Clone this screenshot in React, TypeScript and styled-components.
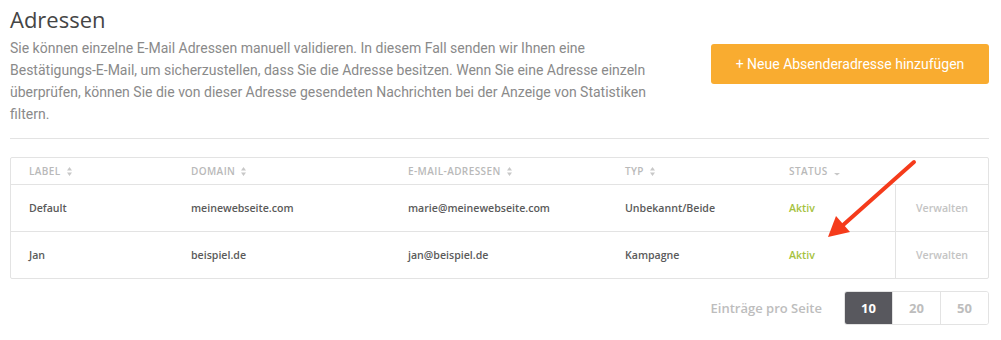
import React from 'react';
import styled, { createGlobalStyle } from 'styled-components';

const GlobalStyle = createGlobalStyle`
  html, body {
    margin: 0;
    padding: 0;
    background: #fff;
  }
  body {
    font-family: Roboto, "Liberation Sans", sans-serif;
  }
`;

const Page = styled.div`
  position: relative;
  width: 1001px;
  height: 340px;
  padding: 0 12px 0 10px;
  box-sizing: border-box;
  overflow: hidden;
`;

const Intro = styled.div`
  display: flex;
  justify-content: space-between;
  align-items: flex-start;
  padding-bottom: 13px;
  border-bottom: 1px solid #e3e3e3;
`;

const IntroText = styled.div`
  width: 660px;
`;

const Title = styled.h1`
  margin: 4px 0 0;
  font-family: "Open Sans", sans-serif;
  font-weight: 400;
  font-size: 22px;
  line-height: 30px;
  color: #454545;
`;

const Lead = styled.p`
  margin: 3px 0 0;
  font-size: 14px;
  line-height: 22px;
  color: #8a8a8a;
`;

const AddButton = styled.button`
  margin-top: 44px;
  width: 278px;
  height: 40px;
  border: none;
  border-radius: 3px;
  background: #f9ac30;
  color: #fff;
  font-family: Roboto, sans-serif;
  font-size: 14px;
  cursor: pointer;
`;

const Table = styled.div`
  margin-top: 18px;
  border: 1px solid #e3e3e3;
  border-radius: 2px;
`;

const cols = '162px 217px 217px 164px 124px 1fr';

const HeadRow = styled.div`
  display: grid;
  grid-template-columns: ${cols};
  height: 26px;
  align-items: center;
  border-bottom: 1px solid #e3e3e3;
`;

const HeadCell = styled.div`
  padding-left: 18px;
  display: flex;
  align-items: center;
  gap: 6px;
  font-family: "Open Sans", sans-serif;
  font-weight: 600;
  font-size: 10px;
  letter-spacing: 0.4px;
  text-transform: uppercase;
  color: #b9b9b9;
`;

const Row = styled.div<{ $last?: boolean }>`
  display: grid;
  grid-template-columns: ${cols};
  height: 46px;
  border-bottom: ${(p) => (p.$last ? 'none' : '1px solid #e3e3e3')};
`;

const Cell = styled.div<{ $tone?: 'green' }>`
  display: flex;
  align-items: center;
  padding-left: 18px;
  font-family: "Open Sans", sans-serif;
  font-weight: 600;
  font-size: 10.6px;
  color: ${(p) => (p.$tone === 'green' ? '#a5c23c' : '#5a5a5a')};
`;

const ActionCell = styled.div`
  display: flex;
  align-items: center;
  justify-content: center;
  border-left: 1px solid #e3e3e3;
  font-family: "Open Sans", sans-serif;
  font-weight: 600;
  font-size: 10.6px;
  color: #c4c4c4;
`;

const Footer = styled.div`
  display: flex;
  justify-content: flex-end;
  align-items: center;
  gap: 22px;
  margin-top: 12px;
`;

const FooterLabel = styled.span`
  font-family: "Open Sans", sans-serif;
  font-weight: 600;
  font-size: 13px;
  color: #bdbdbd;
`;

const PageSizes = styled.div`
  display: flex;
  border: 1px solid #e3e3e3;
  border-radius: 3px;
  overflow: hidden;
`;

const PageSize = styled.button<{ $active?: boolean }>`
  width: 48px;
  height: 32px;
  border: none;
  border-left: 1px solid #e3e3e3;
  &:first-child { border-left: none; width: 47px; }
  background: ${(p) => (p.$active ? '#58585e' : '#fff')};
  color: ${(p) => (p.$active ? '#fff' : '#bdbdbd')};
  font-family: "Open Sans", sans-serif;
  font-weight: 700;
  font-size: 13px;
  cursor: pointer;
`;

const ArrowOverlay = styled.svg`
  position: absolute;
  left: 0;
  top: 0;
  pointer-events: none;
`;

const SortBoth = () => (
  <svg width="5" height="9" viewBox="0 0 5 9">
    <path d="M2.5 0 L5 3.6 H0 Z M2.5 9 L5 5.4 H0 Z" fill="#c8c8c8" />
  </svg>
);

const SortDown = () => (
  <svg width="6" height="9" viewBox="0 0 6 9">
    <path d="M0 6 H6 L3 8.5 Z" fill="#c8c8c8" />
  </svg>
);

const rows = [
  { label: 'Default', domain: 'meinewebseite.com', email: 'marie@meinewebseite.com', type: 'Unbekannt/Beide' },
  { label: 'Jan', domain: 'beispiel.de', email: 'jan@beispiel.de', type: 'Kampagne' },
];

export default function App() {
  return (
    <Page>
      <GlobalStyle />
      <Intro>
        <IntroText>
          <Title>Adressen</Title>
          <Lead>
            Sie können einzelne E-Mail Adressen manuell validieren. In diesem Fall senden wir Ihnen eine
            Bestätigungs-E-Mail, um sicherzustellen, dass Sie die Adresse besitzen. Wenn Sie eine Adresse einzeln
            überprüfen, können Sie die von dieser Adresse gesendeten Nachrichten bei der Anzeige von Statistiken
            filtern.
          </Lead>
        </IntroText>
        <AddButton>+ Neue Absenderadresse hinzufügen</AddButton>
      </Intro>

      <Table>
        <HeadRow>
          <HeadCell>Label <SortBoth /></HeadCell>
          <HeadCell>Domain <SortBoth /></HeadCell>
          <HeadCell>E-Mail-Adressen <SortBoth /></HeadCell>
          <HeadCell>Typ <SortBoth /></HeadCell>
          <HeadCell>Status <SortDown /></HeadCell>
          <HeadCell />
        </HeadRow>
        {rows.map((r, i) => (
          <Row key={r.label} $last={i === rows.length - 1}>
            <Cell>{r.label}</Cell>
            <Cell>{r.domain}</Cell>
            <Cell>{r.email}</Cell>
            <Cell>{r.type}</Cell>
            <Cell $tone="green">Aktiv</Cell>
            <ActionCell>Verwalten</ActionCell>
          </Row>
        ))}
      </Table>

      <Footer>
        <FooterLabel>Einträge pro Seite</FooterLabel>
        <PageSizes>
          <PageSize $active>10</PageSize>
          <PageSize>20</PageSize>
          <PageSize>50</PageSize>
        </PageSizes>
      </Footer>

      <ArrowOverlay width="1001" height="340">
        <line x1="914" y1="162" x2="842" y2="226" stroke="#f53b1b" strokeWidth="4" strokeLinecap="round" />
        <path d="M828 237 L836 216 L850 232 Z" fill="#f53b1b" />
      </ArrowOverlay>
    </Page>
  );
}
